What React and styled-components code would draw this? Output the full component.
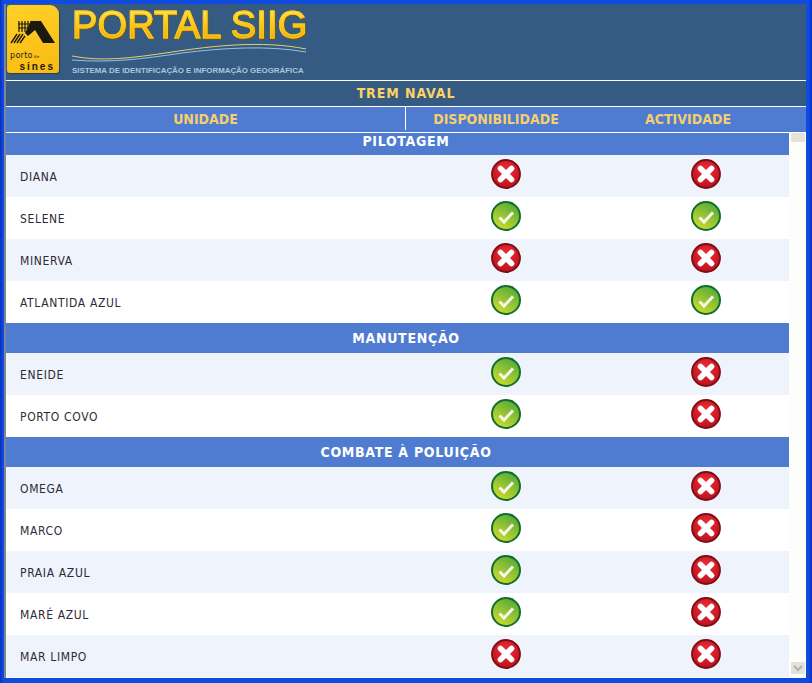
import React from "react";
import styled, { createGlobalStyle } from "styled-components";

const GlobalStyle = createGlobalStyle`
  html, body {
    margin: 0;
    padding: 0;
    background: #0a3fd0;
  }
`;

const Frame = styled.div`
  width: 812px;
  height: 683px;
  box-sizing: border-box;
  padding: 4px 6px 5px 4px;
  background: linear-gradient(90deg, #0a2fc0 0, #0f4be0 3px, #0f4be0 809px, #0a2fc0 812px);
  font-family: "DejaVu Sans", sans-serif;
  font-stretch: condensed;
  overflow: hidden;
`;

const Inner = styled.div`
  height: 100%;
  display: flex;
  flex-direction: column;
  border-left: 2px solid #7a8794;
  background: #fff;
`;

const Header = styled.div`
  height: 76px;
  flex: none;
  display: flex;
  gap: 13px;
  padding: 1px 0 0 1px;
  box-sizing: border-box;
  background: #355b83;
`;

const Logo = styled.div`
  width: 52px;
  height: 68px;
  flex: none;
  display: flex;
  flex-direction: column;
  box-sizing: border-box;
  padding: 15px 0 0 3px;
  border-radius: 3px 9px 3px 3px;
  background: linear-gradient(160deg, #ffd02a, #f8bb10);
  box-shadow: 1px 1px 1px #26405c;
`;

const LogoPorto = styled.span`
  margin-top: 7px;
  font-stretch: normal;
  font-size: 8px;
  line-height: 9px;
  letter-spacing: 0.3px;
  color: #2a2410;
`;

const LogoDe = styled.span`
  font-size: 4px;
  margin-left: 1px;
`;

const LogoSines = styled.span`
  align-self: flex-end;
  margin: 1px 4px 0 0;
  font-family: "Liberation Sans", sans-serif;
  font-size: 10px;
  line-height: 9px;
  font-weight: 700;
  letter-spacing: 2px;
  color: #1c1a10;
`;

const Brand = styled.div`
  width: 240px;
  display: flex;
  flex-direction: column;
`;

const BrandTitle = styled.div`
  font-family: "Liberation Sans", sans-serif;
  font-size: 38px;
  line-height: 36px;
  margin-top: 2px;
  letter-spacing: 0.15px;
  white-space: nowrap;
  color: transparent;
  background: linear-gradient(180deg, #ffe24a 15%, #fbc316 55%, #f0ab08 90%);
  -webkit-background-clip: text;
  background-clip: text;
  -webkit-text-stroke: 1.1px #fbc81c;
  filter: drop-shadow(1px 1px 0.5px #6e5a20);
`;

const BrandSub = styled.div`
  margin-top: 1px;
  font-family: "Liberation Sans", sans-serif;
  font-size: 7.9px;
  line-height: 9px;
  font-weight: 700;
  white-space: nowrap;
  color: #a9c6de;
`;

const TitleBar = styled.div`
  height: 24px;
  flex: none;
  display: flex;
  align-items: center;
  justify-content: center;
  padding-bottom: 1px;
  border-top: 1px solid #fff;
  border-bottom: 1px solid #fff;
  background: #355b83;
  font-size: 14px;
  font-weight: 700;
  letter-spacing: 0.9px;
  color: #fdd267;
`;

const HeadRow = styled.div`
  height: 26px;
  flex: none;
  display: grid;
  box-sizing: border-box;
  grid-template-columns: 400px 180px 1fr;
  padding-right: 16px;
  padding-bottom: 2px;
  border-bottom: 1px solid #fff;
  background: #4f7cd0;
`;

const HeadCell = styled.div`
  display: flex;
  align-items: center;
  justify-content: center;
  font-size: 14px;
  font-weight: 700;
  color: #f5cf6e;
  border-right: ${(p) => (p.$divided ? "1px solid #fff" : "none")};
`;

const Body = styled.div`
  flex: 1;
  min-height: 0;
  display: flex;
`;

const Table = styled.div`
  flex: 1;
  min-width: 0;
`;

const Section = styled.div`
  height: ${(p) => p.$height}px;
  box-sizing: border-box;
  display: flex;
  align-items: ${(p) => (p.$top ? "flex-start" : "center")};
  justify-content: center;
  padding: ${(p) => (p.$top ? "0" : "1px")} 0 0 17px;
  background: #4f7cd0;
  font-size: 14px;
  line-height: 17px;
  font-weight: 700;
  letter-spacing: 0.7px;
  color: #fff;
`;

const Row = styled.div`
  height: 42px;
  display: grid;
  grid-template-columns: 400px 200px 1fr;
  align-items: center;
  background: ${(p) => (p.$alt ? "#eff3fb" : "#fff")};
`;

const Name = styled.div`
  padding: 2px 0 0 14px;
  font-size: 12px;
  letter-spacing: 0.65px;
  color: #2e2a38;
`;

const StatusCell = styled.div`
  display: flex;
  justify-content: ${(p) => (p.$last ? "flex-start" : "center")};
  padding-left: ${(p) => (p.$last ? "85px" : "0")};
  margin-top: -4px;
`;

const Scrollbar = styled.div`
  width: 17px;
  flex: none;
  display: flex;
  flex-direction: column;
  justify-content: space-between;
  align-items: center;
  box-sizing: border-box;
  padding: 0 0 4px;
  background: #fdfdfb;
`;

const ScrollButton = styled.div`
  width: 14px;
  height: ${(p) => p.$height}px;
  display: flex;
  align-items: center;
  justify-content: center;
  background: #e4e2da;
  border-radius: 1px;
`;

const Wave = () => (
  <svg width="236" height="22" viewBox="0 0 236 22" style={{ display: "block" }}>
    <path d="M0 13 C30 19 60 15 100 9 C140 3 190 -3 234 6" fill="none" stroke="#e8cf6a" strokeWidth="1" />
    <path d="M0 17 C40 20 70 16 110 10 C150 5 195 2 234 9" fill="none" stroke="#8fc4e8" strokeWidth="1" />
  </svg>
);

const LogoMark = () => (
  <svg width="46" height="24" viewBox="0 0 46 24" style={{ display: "block" }}>
    <path d="M21 1 H31 L45 23 H33 L25 10 L18 16 L15 13 Z" fill="#1c1a10" />
    <path d="M9 1 V12 M12 1 V12 M15 1 V12 M18 1 V12 M21 1 V9 M8 4 H22 M8 8 H22" stroke="#1c1a10" strokeWidth="1.2" fill="none" />
    <path d="M1 23 L7 14 M4 23 L10 14 M7 23 L13 14 M10 23 L15 16" stroke="#1c1a10" strokeWidth="1.4" fill="none" />
  </svg>
);

const CrossIcon = () => (
  <svg width="30" height="30" viewBox="0 0 30 30">
    <defs>
      <radialGradient id="crossFill" cx="50%" cy="35%" r="70%">
        <stop offset="0" stopColor="#ee2d36" />
        <stop offset="1" stopColor="#b90f1c" />
      </radialGradient>
    </defs>
    <circle cx="15" cy="15" r="14" fill="url(#crossFill)" stroke="#7d0d14" strokeWidth="1.8" />
    <path d="M9.5 9.5 L20.5 20.5 M20.5 9.5 L9.5 20.5" stroke="#fff" strokeWidth="5.6" strokeLinecap="round" />
  </svg>
);

const CheckIcon = () => (
  <svg width="30" height="30" viewBox="0 0 30 30">
    <defs>
      <linearGradient id="checkFill" x1="0.8" y1="0" x2="0.2" y2="1">
        <stop offset="0" stopColor="#4fa83a" />
        <stop offset="1" stopColor="#d6dd2e" />
      </linearGradient>
    </defs>
    <circle cx="15" cy="15" r="14" fill="url(#checkFill)" stroke="#0f6e2a" strokeWidth="2" />
    <path d="M8.5 16.5 L13 21 L22 11.5" fill="none" stroke="#f4f8e6" strokeWidth="3" />
  </svg>
);

const Status = ({ ok }) => (ok ? <CheckIcon /> : <CrossIcon />);

const sections = [
  {
    title: "PILOTAGEM",
    height: 22,
    top: true,
    rows: [
      ["DIANA", false, false],
      ["SELENE", true, true],
      ["MINERVA", false, false],
      ["ATLANTIDA AZUL", true, true],
    ],
  },
  {
    title: "MANUTENÇÃO",
    height: 30,
    rows: [
      ["ENEIDE", true, false],
      ["PORTO COVO", true, false],
    ],
  },
  {
    title: "COMBATE À POLUIÇÃO",
    height: 30,
    rows: [
      ["OMEGA", true, false],
      ["MARCO", true, false],
      ["PRAIA AZUL", true, false],
      ["MARÉ AZUL", true, false],
      ["MAR LIMPO", false, false],
    ],
  },
];

const App = () => (
  <Frame>
    <GlobalStyle />
    <Inner>
      <Header>
        <Logo>
          <LogoMark />
          <LogoPorto>
            porto<LogoDe>de</LogoDe>
          </LogoPorto>
          <LogoSines>sines</LogoSines>
        </Logo>
        <Brand>
          <BrandTitle>PORTAL SIIG</BrandTitle>
          <Wave />
          <BrandSub>SISTEMA DE IDENTIFICAÇÃO E INFORMAÇÃO GEOGRÁFICA</BrandSub>
        </Brand>
      </Header>
      <TitleBar>TREM NAVAL</TitleBar>
      <HeadRow>
        <HeadCell $divided>UNIDADE</HeadCell>
        <HeadCell>DISPONIBILIDADE</HeadCell>
        <HeadCell>ACTIVIDADE</HeadCell>
      </HeadRow>
      <Body>
        <Table>
          {sections.map((section) => (
            <div key={section.title}>
              <Section $height={section.height} $top={section.top}>
                {section.title}
              </Section>
              {section.rows.map(([name, available, active], i) => (
                <Row key={name} $alt={i % 2 === 0}>
                  <Name>{name}</Name>
                  <StatusCell>
                    <Status ok={available} />
                  </StatusCell>
                  <StatusCell $last>
                    <Status ok={active} />
                  </StatusCell>
                </Row>
              ))}
            </div>
          ))}
        </Table>
        <Scrollbar>
          <ScrollButton $height={9} />
          <ScrollButton $height={12}>
            <svg width="10" height="7" viewBox="0 0 10 7">
              <path d="M1 1 L5 5 L9 1" fill="none" stroke="#b5b3a8" strokeWidth="2" />
            </svg>
          </ScrollButton>
        </Scrollbar>
      </Body>
    </Inner>
  </Frame>
);

export default App;
